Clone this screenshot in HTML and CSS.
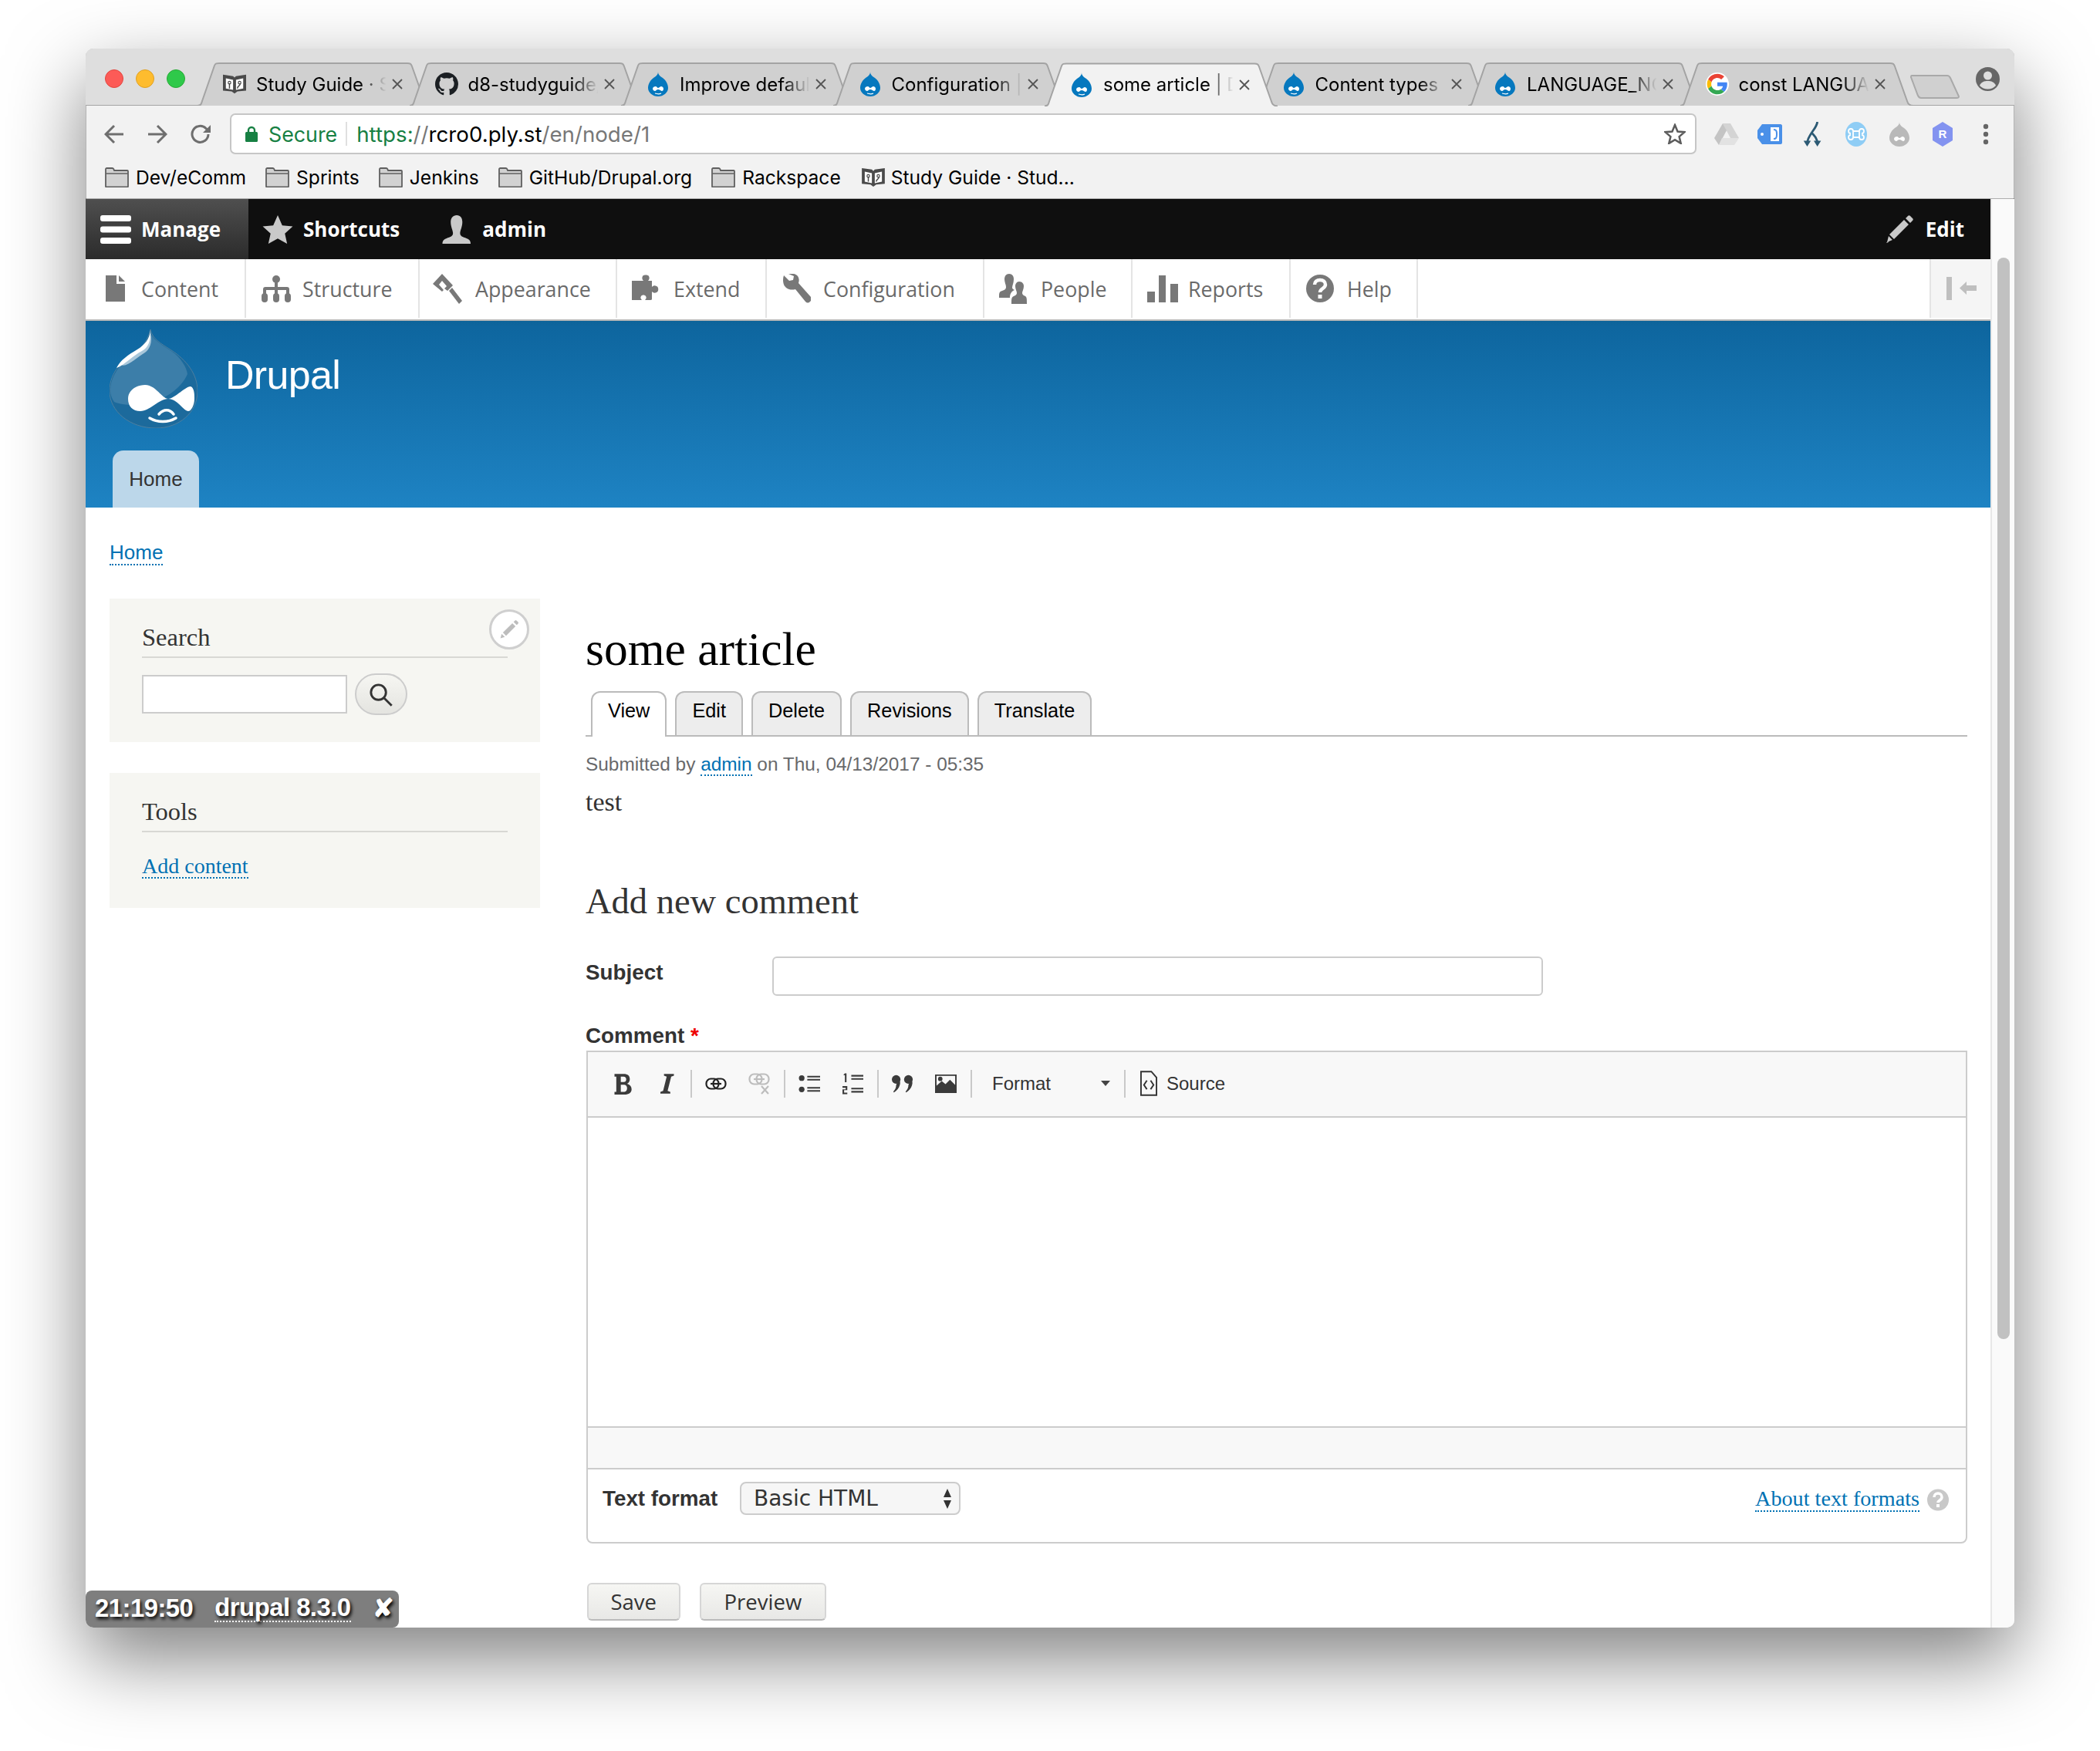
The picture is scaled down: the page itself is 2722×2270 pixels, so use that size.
FILE: index.html
```html
<!DOCTYPE html>
<html lang="en">
<head>
  <meta charset="UTF-8">
  <title>some article | Drupal</title>
  <link rel="stylesheet" href="styles.css">
</head>
<body>

<svg class="sprite" xmlns="http://www.w3.org/2000/svg">
  <symbol id="tab-bg" viewBox="0 0 302 56">
    <path d="M0 56C4 56 5 54 6 50L22 4C23 1 25 1 28 1H272C276 1 277 2 278 5L294 50C295 54 297 56 302 56"/>
  </symbol>
  <symbol id="book" viewBox="0 0 32 28">
    <path fill="#4a4a4a" d="M0 1l14 2 2 2 2-2 14-2v22l-12 1-4 3-4-3-12-1z"/>
    <path fill="#fff" d="M4 6l10 2v14l-10-2zM28 6l-10 2v14l10-2z"/>
    <path fill="none" stroke="#4a4a4a" stroke-width="1.6" d="M9 20v-7M24 13c0 4-4 3-4 7"/>
    <circle cx="9" cy="12" r="1.800" fill="none" stroke="#4a4a4a" stroke-width="1.300"/>
    <circle cx="23" cy="12" r="1.800" fill="none" stroke="#4a4a4a" stroke-width="1.300"/>
  </symbol>
  <symbol id="drop" viewBox="0 0 30 32">
    <path fill="#0678be" d="M15 0c0 4 3 6 6 8 4 3 7 8 7 13 0 6-6 11-13 11S2 27 2 21c0-5 3-10 7-13 3-2 6-4 6-8z"/>
    <path fill="#fff" d="M8 22c0-2 2-3 4-3 1 0 2 2 3 2s3-2 4-2 3 1 3 3-1 3-2 3-3-2-5-2-3 2-4 2-3-1-3-3z"/>
    <path fill="none" stroke="#fff" stroke-width="1.200" d="M11 28c3 1 6 1 8 0"/>
  </symbol>
  <symbol id="close-x" viewBox="0 0 16 16">
    <path fill="none" stroke="#555" stroke-width="1.8" d="M2 2l12 12M14 2L2 14"/>
  </symbol>
  <symbol id="folder" viewBox="0 0 31 26">
    <path fill="#d2d2d2" stroke="#5f5f5f" stroke-width="1.8" d="M1 24.500V2.500c0-1 .5-1.500 1.500-1.500h7c1 0 1.500.5 2 1.500l.5 1.500H29c.8 0 1 .5 1 1v19.500c0 .5-.2 1-1 1H2c-.8 0-1-.5-1-1z"/>
    <path fill="#f3f3f3" stroke="#5f5f5f" stroke-width="1.4" d="M1.500 8h28"/>
  </symbol>
</svg>

<div class="window">

  <div class="tabstrip">
    <div class="lights">
      <span class="light red"></span>
      <span class="light amber"></span>
      <span class="light green"></span>
    </div>
    <div class="tabs">
      <div class="tab">
        <svg class="tab-bg"><use href="#tab-bg"/></svg>
        <svg class="favicon" viewBox="0 0 32 28"><use href="#book"/></svg>
        <span class="tab-title">Study Guide · Study Guide</span>
        <svg class="tab-x"><use href="#close-x"/></svg>
      </div>
      <div class="tab">
        <svg class="tab-bg"><use href="#tab-bg"/></svg>
        <svg class="favicon" viewBox="0 0 16 16"><path fill="#1b1f23" d="M8 0C3.580 0 0 3.580 0 8c0 3.540 2.290 6.530 5.470 7.590.4.070.55-.17.55-.38 0-.19-.01-.82-.01-1.490-2.010.37-2.530-.49-2.690-.94-.09-.23-.48-.94-.82-1.130-.28-.15-.68-.52-.01-.53.63-.01 1.080.58 1.230.82.720 1.210 1.870.87 2.330.66.070-.52.28-.87.51-1.070-1.780-.2-3.640-.89-3.640-3.950 0-.87.31-1.590.82-2.150-.08-.2-.36-1.020.08-2.120 0 0 .67-.21 2.200.82.64-.18 1.320-.27 2-.27.68 0 1.360.09 2 .27 1.530-1.040 2.200-.82 2.200-.82.44 1.100.16 1.920.08 2.120.51.56.82 1.270.82 2.150 0 3.070-1.870 3.750-3.650 3.950.29.25.54.73.54 1.480 0 1.070-.01 1.930-.01 2.200 0 .21.15.46.55.38A8.013 8.013 0 0016 8c0-4.420-3.580-8-8-8z"/></svg>
        <span class="tab-title">d8-studyguide/README</span>
        <svg class="tab-x"><use href="#close-x"/></svg>
      </div>
      <div class="tab">
        <svg class="tab-bg"><use href="#tab-bg"/></svg>
        <svg class="favicon"><use href="#drop"/></svg>
        <span class="tab-title">Improve default language</span>
        <svg class="tab-x"><use href="#close-x"/></svg>
      </div>
      <div class="tab">
        <svg class="tab-bg"><use href="#tab-bg"/></svg>
        <svg class="favicon"><use href="#drop"/></svg>
        <span class="tab-title">Configuration | Drupal</span>
        <svg class="tab-x"><use href="#close-x"/></svg>
      </div>
      <div class="tab tab-active">
        <svg class="tab-bg"><use href="#tab-bg"/></svg>
        <svg class="favicon"><use href="#drop"/></svg>
        <span class="tab-title">some article | Drupal</span>
        <svg class="tab-x"><use href="#close-x"/></svg>
      </div>
      <div class="tab">
        <svg class="tab-bg"><use href="#tab-bg"/></svg>
        <svg class="favicon"><use href="#drop"/></svg>
        <span class="tab-title">Content types | Drupal</span>
        <svg class="tab-x"><use href="#close-x"/></svg>
      </div>
      <div class="tab">
        <svg class="tab-bg"><use href="#tab-bg"/></svg>
        <svg class="favicon"><use href="#drop"/></svg>
        <span class="tab-title">LANGUAGE_NOT_SPECIFIED</span>
        <svg class="tab-x"><use href="#close-x"/></svg>
      </div>
      <div class="tab">
        <svg class="tab-bg"><use href="#tab-bg"/></svg>
        <svg class="favicon" viewBox="-3 -3 54 54">
          <circle cx="24" cy="24" r="27" fill="#fff"/>
          <path fill="#EA4335" d="M24 9.500c3.540 0 6.710 1.220 9.210 3.600l6.850-6.850C35.900 2.380 30.470 0 24 0 14.620 0 6.510 5.380 2.560 13.220l7.980 6.190C12.430 13.720 17.740 9.500 24 9.500z"/>
          <path fill="#4285F4" d="M46.980 24.550c0-1.570-.15-3.090-.38-4.550H24v9.020h12.940c-.58 2.960-2.260 5.480-4.780 7.180l7.730 6c4.510-4.180 7.090-10.360 7.090-17.650z"/>
          <path fill="#FBBC05" d="M10.530 28.590c-.48-1.450-.76-2.990-.76-4.590s.27-3.140.76-4.590l-7.980-6.190C.92 16.460 0 20.120 0 24c0 3.880.92 7.540 2.560 10.780l7.970-6.190z"/>
          <path fill="#34A853" d="M24 48c6.480 0 11.930-2.130 15.890-5.810l-7.730-6c-2.150 1.450-4.920 2.300-8.160 2.300-6.260 0-11.570-4.220-13.470-9.910l-7.980 6.190C6.510 42.620 14.620 48 24 48z"/>
        </svg>
        <span class="tab-title">const LANGUAGE_NOT</span>
        <svg class="tab-x"><use href="#close-x"/></svg>
      </div>
    </div>
    <svg class="newtab" viewBox="0 0 64 31"><path d="M2 1H48C50 1 51 2 52 4L63 28C63 30 62 30 60 30H14C12 30 11 29 10 27L1 3C1 2 1 1 2 1Z"/></svg>
    <svg class="profile" viewBox="0 0 31 31"><circle cx="15.500" cy="15.500" r="15.500" fill="#666"/><circle cx="15.500" cy="11" r="5.500" fill="#dedede"/><path fill="#dedede" d="M5 24c2-5 6-6 10.500-6s8.500 1 10.500 6c-3 3-6.500 4.500-10.500 4.500S8 27 5 24z"/></svg>
  </div>

  <div class="toolbar">
    <svg class="nav-icon" viewBox="0 0 26 26"><path d="M25 13H3M13 2L2 13l11 11"/></svg>
    <svg class="nav-icon" viewBox="0 0 26 26"><path d="M1 13h22M13 2l11 11-11 11"/></svg>
    <svg class="nav-icon" viewBox="0 0 26 26"><path d="M23 13a10.500 10.500 0 1 1-3-7.500l3 3"/><path class="nav-fill" d="M26 1v10H16z"/></svg>
    <div class="omnibox">
      <svg class="lock" viewBox="0 0 16 21"><path fill="none" stroke="#178043" stroke-width="2.400" d="M4 9V6a4 4 0 0 1 8 0v3"/><rect y="8" width="16" height="13" rx="1.500" fill="#178043"/></svg>
      <span class="secure">Secure</span>
      <span class="omni-sep"></span>
      <span class="url"><span class="url-https">https:</span><span class="url-dim">//</span>rcro0.ply.st<span class="url-dim">/en/node/1</span></span>
      <svg class="bookmark-star" viewBox="0 0 28 27"><path d="M14 2l3.500 8.500 9 .7-6.900 5.900 2.100 8.800L14 21.200 6.300 25.900l2.100-8.800L1.500 11.200l9-.7z"/></svg>
    </div>
    <div class="extensions">
      <svg class="ext" viewBox="0 0 32 30"><path fill="#d4d4d4" d="M11 1h10l11 19H21z"/><path fill="#c4c4c4" d="M11 1l5 9L6 29 0 20z"/><path fill="#e2e2e2" d="M10 20h22l-6 9H6z"/></svg>
      <svg class="ext" viewBox="0 0 32 30"><path fill="#4a90e8" d="M6 2h24c1 0 2 1 2 2v22c0 1-1 2-2 2H6l-6-8v-10z"/><rect x="17" y="6" width="11" height="18" fill="#fff"/><circle cx="6" cy="15" r="2" fill="#fff"/><path fill="none" stroke="#4a90e8" stroke-width="2" d="M21 9c3 0 4 1 4 6s-1 6-4 6"/></svg>
      <svg class="ext" viewBox="0 0 28 34"><path fill="none" stroke="#2c5a74" stroke-width="3" d="M20 0c-1 10-14 18-14 30M12 15c4 4 8 8 8 15"/><path fill="#2c5a74" d="M1 26l5 8 5-8zM15 26l5 8 5-8z"/></svg>
      <svg class="ext" viewBox="0 0 28 32"><ellipse cx="14" cy="16" rx="14" ry="16" fill="#8fcdf5"/><path fill="none" stroke="#fff" stroke-width="1.800" d="M10 12h8v8h-8zM10 12a3 3 0 1 0-3 3M18 12a3 3 0 1 1 3 3M10 20a3 3 0 1 1-3-3M18 20a3 3 0 1 0 3-3"/></svg>
      <svg class="ext ext-gray" viewBox="0 0 30 32"><path fill="#b9b9b9" d="M15 0c0 4 3 6 6 8 4 3 7 8 7 13 0 6-6 11-13 11S2 27 2 21c0-5 3-10 7-13 3-2 6-4 6-8z"/><path fill="#fff" d="M8 22c0-2 2-3 4-3 1 0 2 2 3 2s3-2 4-2 3 1 3 3-1 3-2 3-3-2-5-2-3 2-4 2-3-1-3-3z"/></svg>
      <svg class="ext" viewBox="0 0 30 32"><path fill="#8393f0" d="M15 0l13 8v16l-13 8-13-8V8z"/><text x="15" y="21" class="ext-r">R</text></svg>
      <svg class="menu-dots" viewBox="0 0 8 28"><circle cx="4" cy="4" r="3.200"/><circle cx="4" cy="14" r="3.200"/><circle cx="4" cy="24" r="3.200"/></svg>
    </div>
  </div>

  <div class="bookmarks">
    <span class="bm"><svg class="bm-icon"><use href="#folder"/></svg>Dev/eComm</span>
    <span class="bm"><svg class="bm-icon"><use href="#folder"/></svg>Sprints</span>
    <span class="bm"><svg class="bm-icon"><use href="#folder"/></svg>Jenkins</span>
    <span class="bm"><svg class="bm-icon"><use href="#folder"/></svg>GitHub/Drupal.org</span>
    <span class="bm"><svg class="bm-icon"><use href="#folder"/></svg>Rackspace</span>
    <span class="bm"><svg class="bm-icon bm-book"><use href="#book"/></svg>Study Guide · Stud...</span>
  </div>

  <div class="viewport">
    <div class="page">

      <div class="adminbar">
        <a class="admin-item admin-manage">
          <svg class="admin-icon" viewBox="0 0 40 37"><rect width="40" height="8" rx="3"/><rect y="14.500" width="40" height="8" rx="3"/><rect y="29" width="40" height="8" rx="3"/></svg>
          Manage
        </a>
        <a class="admin-item">
          <svg class="admin-icon star" viewBox="0 0 40 38"><path d="M20 0l6 13.500 14 1.500-10.500 9.500 3 13.500L20 31l-12.500 7 3-13.500L0 15l14-1.500z"/></svg>
          Shortcuts
        </a>
        <a class="admin-item admin-user">
          <svg class="admin-icon" viewBox="0 0 40 38"><path d="M20 0c5 0 7.500 4 7.500 9 0 7-3 11-3 15 0 4 3 5 9 7 4 1.500 5 4 5 7H1c0-3 1-5.500 5-7 6-2 9-3 9-7 0-4-3-8-3-15 0-5 3-9 8-9z"/></svg>
          admin
        </a>
        <a class="admin-item admin-edit">
          <svg class="admin-icon" viewBox="0 0 36 36"><path d="M5 25L24 6l6 6-19 19zM26 4l3-3c1-1 2-1 3 0l3 3c1 1 1 2 0 3l-3 3z"/><path d="M4 27l5 5-7 3zM1 36l2-3 1 2z"/></svg>
          Edit
        </a>
      </div>

      <div class="tray">
        <a class="tray-item item-content">
          <svg class="tray-icon" viewBox="0 0 25 34"><path d="M0 0h14v11h11v23H0zM17 0l8 8h-8z"/></svg>
          Content
        </a>
        <a class="tray-item item-structure">
          <svg class="tray-icon" viewBox="0 0 38 35"><circle cx="19" cy="5" r="5"/><path d="M17 8h4v7h12c2 0 3 1 3 3v6h-4v-5H21v5h-4v-5H6v5H2v-6c0-2 1-3 3-3h12z"/><rect y="23" width="8" height="12" rx="4"/><rect x="15" y="23" width="8" height="12" rx="4"/><rect x="30" y="23" width="8" height="12" rx="4"/></svg>
          Structure
        </a>
        <a class="tray-item item-appearance">
          <svg class="tray-icon" viewBox="0 0 38 39"><path fill-rule="evenodd" d="M12 0l14 15-7 7-4-3 3-3-6-7-4 5 6 7-2 2L0 13zM21 22l4-4 13 17-4 4z"/></svg>
          Appearance
        </a>
        <a class="tray-item item-extend">
          <svg class="tray-icon" viewBox="0 0 40 36"><path d="M10 8h5c-2-2-2-4-1-6 1-2 7-2 8 0 1 2 1 4-1 6h5v8c2-2 4-2 6-1 3 1 3 7 0 8-2 1-4 1-6-1v9c0 1 0 2-2 2h-7c2-2 2-4 1-5-1-2-5-2-6 0-1 1-1 3 1 5H0V8z"/></svg>
          Extend
        </a>
        <a class="tray-item item-config">
          <svg class="tray-icon" viewBox="0 0 38 39"><path d="M3 2l7 7 5-1 1-5-7-3c5-1 10 0 12 3 2 3 2 6 1 9l16 18c1 2 1 4-1 6-2 2-4 2-6 0L18 20c-4 1-8 1-12-2C2 15 1 8 3 2z"/></svg>
          Configuration
        </a>
        <a class="tray-item item-people">
          <svg class="tray-icon" viewBox="0 0 36 39"><path d="M13 0c4 0 6 3 6 7 0 5-2 8-2 11 0 1 1 2 3 3-3 1-6 4-6 10H0c0-6 0-8 4-9 4-1 5-3 5-5 0-3-2-6-2-10s2-7 6-7z"/><path d="M26 10c4 0 6 3 6 6 0 4-2 6-2 9 0 2 2 3 4 4 2 1 2 4 2 10H16c0-6 0-9 3-10 2-1 4-2 4-4 0-3-2-5-2-9 0-3 2-6 5-6z"/></svg>
          People
        </a>
        <a class="tray-item item-reports">
          <svg class="tray-icon" viewBox="0 0 40 35"><rect y="21" width="10" height="14"/><rect x="15" width="9" height="35"/><rect x="30" y="11" width="10" height="24"/></svg>
          Reports
        </a>
        <a class="tray-item item-help">
          <svg class="tray-icon" viewBox="0 0 36 36"><circle cx="18" cy="18" r="18"/><path fill="none" stroke="#fff" stroke-width="4.500" d="M11 13c0-4 3-6 7-6s7 2 7 6c0 5-7 5-7 10"/><rect x="15.500" y="26" width="5" height="5" fill="#fff"/></svg>
          Help
        </a>
        <div class="tray-toggle">
          <svg viewBox="0 0 39 30"><rect width="7" height="30"/><path d="M17 14.500l9-8.500v5h13v7H26v5z"/></svg>
        </div>
      </div>

      <header class="site-header">
        <div class="branding">
          <svg class="logo" viewBox="0 0 114 128">
            <path fill="#1c6a9c" stroke="#4e7f9f" stroke-width="1" d="M53 0C55 12 66 18 80 27 100 40 114 58 114 80 114 108 90 128 60 128 26 128 0 106 0 80 0 55 18 38 36 27 44 22 50 12 53 0Z"/>
            <path fill="#3c7ea9" d="M53 4C56 13 66 19 80 28 93 37 100 50 101 58 92 78 72 90 50 96 34 100 16 98 6 94 2 88 1 84 1 78 3 52 22 38 36 28 44 22 50 14 53 4Z"/>
            <path fill="#a9c7da" d="M53 6C51 16 48 20 40 26 28 34 20 40 15 46 22 50 36 36 46 30 52 26 56 16 53 6Z"/>
            <path fill="#fff" d="M53 1C52 12 46 20 36 26 24 33 14 40 9 50 20 46 30 34 42 28 50 24 54 14 53 1Z"/>
            <path fill="#fff" d="M24 90C24 78 36 72 46 72 60 72 68 90 76 90 84 90 98 74 105 74 110 76 110 84 110 90 110 98 106 106 102 106 96 106 88 90 76 90 64 90 52 106 40 106 30 106 24 100 24 90Z"/>
            <path fill="none" stroke="#fff" stroke-width="3.500" stroke-linecap="round" d="M52 115C62 121 76 121 86 115M64 110C70 103 78 103 83 110"/>
          </svg>
          <span class="site-name">Drupal</span>
        </div>
        <nav class="main-nav"><a class="main-nav-link">Home</a></nav>
      </header>

      <div class="breadcrumb"><a class="link">Home</a></div>

      <div class="layout">
        <aside class="sidebar">
          <section class="block">
            <h2 class="block-title">Search</h2>
            <button class="contextual"><svg viewBox="0 0 32 32"><path d="M6 21L21 6l5 5-15 15zM23 4l2-2c1-1 2-1 3 0l2 2c1 1 1 2 0 3l-2 2zM4 23l5 5-7 2z"/></svg></button>
            <form class="search-form">
              <input class="search-input" type="text">
              <button class="search-button" type="button"><svg viewBox="0 0 28 28"><circle cx="11" cy="11" r="8.500"/><path d="M17 17l9 9"/></svg></button>
            </form>
          </section>
          <section class="block">
            <h2 class="block-title">Tools</h2>
            <div class="block-links"><a class="link">Add content</a></div>
          </section>
        </aside>

        <main class="content">
          <h1 class="page-title">some article</h1>
          <ul class="local-tabs">
            <li class="local-tab active">View</li>
            <li class="local-tab">Edit</li>
            <li class="local-tab">Delete</li>
            <li class="local-tab">Revisions</li>
            <li class="local-tab">Translate</li>
          </ul>
          <p class="submitted">Submitted by <a class="link">admin</a> on Thu, 04/13/2017 - 05:35</p>
          <p class="body-text">test</p>

          <h2 class="comment-title">Add new comment</h2>

          <div class="field-subject">
            <label class="field-label">Subject</label>
            <input class="subject-input" type="text">
          </div>

          <label class="field-label comment-label">Comment <span class="required">*</span></label>

          <div class="editor">
            <div class="editor-toolbar">
              <span class="ed-btn"><svg viewBox="0 0 20 24"><path fill-rule="evenodd" d="M1 1h10c5 0 7 2 7 6 0 2-1 4-3 5 3 1 5 3 5 6 0 4-3 6-8 6H1v-3h2V4H1zM8 4v6h3c2 0 3-1 3-3s-1-3-3-3zM8 13v8h4c2 0 3-2 3-4s-1-4-3-4z"/></svg></span>
              <span class="ed-btn"><svg viewBox="0 0 18 24"><path d="M7 1h11v2l-3 1-4 16 3 1v2H3v-2l3-1 4-16-3-1z"/></svg></span>
              <span class="ed-sep"></span>
              <span class="ed-btn"><svg class="ed-stroke" viewBox="0 0 28 16"><rect x="1.500" y="1.500" width="16" height="13" rx="6"/><rect x="10.500" y="1.500" width="16" height="13" rx="6"/><path d="M7 8h14"/></svg></span>
              <span class="ed-btn ed-off"><svg class="ed-stroke" viewBox="0 0 28 28"><rect x="1.500" y="1.500" width="16" height="13" rx="6"/><rect x="10.500" y="1.500" width="16" height="13" rx="6"/><path d="M7 8h14"/><path class="ed-x" d="M17 17l9 10M26 17l-9 10"/></svg></span>
              <span class="ed-sep"></span>
              <span class="ed-btn"><svg viewBox="0 0 27 24"><circle cx="4" cy="5" r="3.500"/><circle cx="4" cy="19" r="3.500"/><path d="M11 2h16v2H11zM11 6h16v2H11zM11 16h16v2H11zM11 20h16v2H11z"/></svg></span>
              <span class="ed-btn"><svg viewBox="0 0 27 26"><path d="M12 2h15v2H12zM12 6h15v2H12zM12 18h15v2H12zM12 22h15v2H12z"/><path d="M2 2l2-2h2v11H4V2.500zM1 16h6v5H3v3h4v2H1v-6h4v-2H1z"/></svg></span>
              <span class="ed-sep"></span>
              <span class="ed-btn"><svg viewBox="0 0 30 24"><circle cx="6" cy="6" r="6"/><circle cx="23" cy="6" r="6"/><path d="M8 8c4 0 4 2 3 6-1 4-4 8-8 10l-1-1c3-3 4-6 4-9zM25 8c4 0 4 2 3 6-1 4-4 8-8 10l-1-1c3-3 4-6 4-9z"/></svg></span>
              <span class="ed-btn"><svg viewBox="0 0 29 25"><path fill-rule="evenodd" d="M0 0h29v25H0zM2 2v13l7-6 5 4 6-6 7 7V2z"/><circle cx="7" cy="6" r="3"/></svg></span>
              <span class="ed-sep"></span>
              <span class="ed-format">Format<i class="caret"></i></span>
              <span class="ed-sep"></span>
              <span class="ed-source">
                <svg viewBox="0 0 23 34"><path fill="none" stroke="#333" stroke-width="2" d="M1 1h14l7 8v24H1z"/><path fill="none" stroke="#333" stroke-width="2" d="M9 13l-4 6 4 6M14 13l4 6-4 6"/></svg>
                Source
              </span>
            </div>
            <div class="editor-body"></div>
            <div class="editor-path"></div>
            <div class="format-row">
              <div class="format-left">
                <label class="field-label format-label">Text format</label>
                <div class="format-select">Basic HTML<svg viewBox="0 0 12 28"><path d="M6 1l5 11H1zM6 27l5-11H1z"/></svg></div>
              </div>
              <div class="format-help">
                <a class="link serif-link">About text formats</a>
                <svg class="help-badge" viewBox="0 0 28 29"><circle cx="14" cy="14.500" r="14"/><path fill="none" stroke="#fff" stroke-width="3.500" d="M9 11c0-3 2-5 5-5s5 2 5 5c0 4-5 4-5 7"/><rect x="12" y="20" width="4" height="4" fill="#fff"/></svg>
              </div>
            </div>
          </div>

          <div class="form-actions">
            <button class="form-button" type="button">Save</button>
            <button class="form-button" type="button">Preview</button>
          </div>
        </main>
      </div>
    </div>

    <div class="scrollbar"><div class="scroll-thumb"></div></div>

    <div class="devbar">
      <span>21:19:50</span>
      <a class="devbar-link">drupal 8.3.0</a>
      <span>✘</span>
    </div>
  </div>
</div>

</body>
</html>
```

FILE: styles.css
```css
* {
  box-sizing: border-box;
}
html, body {
  margin: 0;
  background: #fff;
}
body {
  width: 2722px;
  height: 2270px;
  overflow: hidden;
  font-family: "Liberation Sans", Arial, sans-serif;
  color: #333;
}
a {
  text-decoration: none;
}
.sprite {
  position: absolute;
  width: 0;
  height: 0;
}

/* browser window */
.window {
  position: relative;
  width: 2500px;
  height: 2047px;
  margin: 63px 0 0 111px;
  border-radius: 10px;
  overflow: hidden;
  outline: 1px solid rgba(0,0,0,.25);
  outline-offset: -1px;
  display: flex;
  flex-direction: column;
}
body::before {
  content: "";
  position: absolute;
  left: 111px;
  top: 63px;
  width: 2500px;
  height: 2047px;
  border-radius: 10px;
  box-shadow: 0 40px 100px rgba(0,0,0,.5);
}

.tabstrip {
  height: 74px;
  flex: none;
  display: flex;
  align-items: flex-start;
  padding-left: 25px;
  background: #dedede;
  border-bottom: 1px solid #a4a4a4;
  position: relative;
}
.lights {
  display: flex;
  gap: 16px;
  margin-top: 27px;
}
.light {
  width: 24px;
  height: 24px;
  border-radius: 50%;
}
.red { background: #fc5b57; border: 1px solid #e2463f; }
.amber { background: #febc2e; border: 1px solid #dfa023; }
.green { background: #2fc94a; border: 1px solid #27aa35; }

.tabs {
  display: flex;
  margin: 18px 0 0 16px;
}
.tab {
  position: relative;
  width: 302px;
  height: 56px;
  margin-right: -27.5px;
  padding-left: 33px;
  display: flex;
  align-items: center;
  font-family: Inter, "Liberation Sans", sans-serif;
  font-size: 24px;
  color: #000;
}
.tab-active {
  z-index: 2;
  height: 57px;
}
.tab-bg {
  position: absolute;
  left: 0;
  top: 0;
  width: 302px;
  height: 56px;
  fill: #d0d0d0;
  stroke: #a3a3a3;
  stroke-width: 2px;
}
.tab-active .tab-bg {
  height: 57px;
  fill: #f2f2f2;
}
.favicon {
  position: relative;
  width: 30px;
  height: 32px;
  flex: none;
}
.tab-title {
  position: relative;
  width: 172px;
  margin-left: 13px;
  white-space: nowrap;
  overflow: hidden;
  -webkit-mask-image: linear-gradient(to right, #000 78%, transparent 98%);
  mask-image: linear-gradient(to right, #000 78%, transparent 98%);
}
.tab-x {
  position: relative;
  width: 16px;
  height: 16px;
  margin-left: 3px;
  flex: none;
}
.newtab {
  width: 64px;
  height: 31px;
  margin: 34px 0 0 24px;
  fill: #d0d0d0;
  stroke: #a9a9a9;
  stroke-width: 2px;
  flex: none;
}
.profile {
  width: 31px;
  height: 31px;
  margin: 24px 0 0 21px;
  flex: none;
}

/* address bar */
.toolbar {
  height: 74px;
  flex: none;
  display: flex;
  align-items: flex-start;
  padding: 10px 0 0 24px;
  background: #f2f2f2;
}
.nav-icon {
  width: 26px;
  height: 26px;
  margin: 14px 30px 0 0;
  fill: none;
  stroke: #6e6e6e;
  stroke-width: 3px;
  flex: none;
}
.nav-icon:nth-child(3) {
  margin-right: 25px;
}
.nav-fill {
  fill: #6e6e6e;
  stroke: none;
}
.omnibox {
  width: 1901px;
  height: 53px;
  flex: none;
  display: flex;
  align-items: center;
  padding-left: 18px;
  padding-right: 12px;
  background: #fff;
  border: 2px solid #c6c6c6;
  border-radius: 7px;
  font-family: Inter, "Liberation Sans", sans-serif;
  font-size: 26.800px;
}
.lock {
  width: 16px;
  height: 21px;
  flex: none;
}
.secure {
  margin-left: 14px;
  color: #178043;
}
.omni-sep {
  width: 2px;
  height: 31px;
  margin: 0 12px 0 11px;
  background: #e0e0e0;
}
.url {
  color: #000;
  flex: 1;
  font-size: 27.700px;
}
.url-https {
  color: #178043;
}
.url-dim {
  color: #777;
}
.bookmark-star {
  width: 28px;
  height: 27px;
  fill: none;
  stroke: #5c5c5c;
  stroke-width: 2.5px;
}
.extensions {
  display: flex;
  align-items: center;
  height: 53px;
  gap: 24px;
  margin-left: 23px;
}
.ext {
  width: 32px;
  height: 32px;
}
.ext-r {
  font: bold 15px "Liberation Sans", sans-serif;
  fill: #fff;
  text-anchor: middle;
}
.menu-dots {
  width: 8px;
  height: 28px;
  margin-left: 12px;
  fill: #666;
}

/* bookmarks */
.bookmarks {
  height: 47px;
  flex: none;
  display: flex;
  align-items: center;
  gap: 25px;
  padding: 0 0 9px 25px;
  background: #f2f2f2;
  border-bottom: 1px solid #aeaeae;
  font-family: Inter, "Liberation Sans", sans-serif;
  font-size: 24.600px;
  color: #000;
}
.bm {
  display: flex;
  align-items: center;
  gap: 9px;
}
.bm-icon {
  width: 31px;
  height: 26px;
}
.bm-book {
  width: 34px;
  margin-right: -3px;
}

/* viewport */
.viewport {
  flex: 1;
  min-height: 0;
  display: flex;
  position: relative;
  background: #fff;
}
.page {
  flex: 1;
  min-width: 0;
  overflow: hidden;
}
.scrollbar {
  width: 31px;
  flex: none;
  padding: 76px 6px 0 7px;
  background: #fafafa;
  border-left: 2px solid #e8e8e8;
}
.scroll-thumb {
  height: 1402px;
  border-radius: 9px;
  background: #c1c1c1;
}

/* admin toolbar */
.adminbar {
  height: 78px;
  display: flex;
  background: #0f0f0f;
  font-family: "Open Sans", sans-serif;
  font-weight: 700;
  font-size: 26px;
  color: #fff;
}
.admin-item {
  display: flex;
  align-items: center;
  padding-left: 18px;
  gap: 13px;
}
.admin-manage {
  width: 211px;
  padding-left: 19px;
  gap: 13px;
  background: linear-gradient(#4f4f4f, #2b2b2b);
}
.admin-user {
  margin-left: 36px;
}
.admin-edit {
  margin-left: auto;
  padding-right: 34px;
  gap: 16px;
}
.admin-icon {
  width: 40px;
  height: 37px;
  fill: #c9c9c9;
  flex: none;
}
.admin-manage .admin-icon {
  fill: #fff;
}
.admin-edit .admin-icon {
  width: 36px;
  height: 36px;
}

.tray {
  height: 80px;
  display: flex;
  padding-bottom: 2px;
  background: #fff;
  border-bottom: 2px solid #b8b8b8;
  font-family: "Open Sans", sans-serif;
  font-size: 26.800px;
  color: #6a6a6a;
}
.tray-item {
  display: flex;
  align-items: center;
  border-right: 2px solid #e4e4e4;
  flex: none;
}
.tray-icon {
  fill: #787878;
  flex: none;
  margin-right: 16px;
}
.item-content { width: 208px; padding-left: 26px; }
.item-content .tray-icon { width: 25px; height: 34px; margin-right: 21px; }
.item-structure { width: 225px; padding-left: 20px; }
.item-structure .tray-icon { width: 38px; height: 35px; margin-right: 15px; }
.item-appearance { width: 256px; padding-left: 17px; }
.item-appearance .tray-icon { width: 38px; height: 39px; margin-right: 17px; }
.item-extend { width: 194px; padding-left: 19px; }
.item-extend .tray-icon { width: 40px; height: 36px; margin-right: 14px; }
.item-config { width: 282px; padding-left: 19px; }
.item-config .tray-icon { width: 38px; height: 39px; }
.item-people { width: 192px; padding-left: 19px; }
.item-people .tray-icon { width: 36px; height: 39px; margin-right: 18px; }
.item-reports { width: 205px; padding-left: 19px; }
.item-reports .tray-icon { width: 40px; height: 35px; margin-right: 13px; }
.item-help { width: 165px; padding-left: 20px; }
.item-help .tray-icon { width: 36px; height: 36px; margin-right: 17px; }
.tray-toggle {
  margin-left: auto;
  width: 79px;
  display: flex;
  align-items: center;
  padding-left: 20px;
  background: #f5f5f5;
  border-left: 2px solid #e4e4e4;
  fill: #bfbfbf;
}
.tray-toggle svg {
  width: 39px;
  height: 30px;
}

/* site header */
.site-header {
  height: 242px;
  display: flex;
  flex-direction: column;
  justify-content: space-between;
  padding-top: 11px;
  background: linear-gradient(#0d6399 0, #0e669f 8px, #1e83c3 100%);
}
.branding {
  display: flex;
  align-items: flex-start;
  gap: 36px;
  padding-left: 31px;
}
.logo {
  width: 114px;
  height: 128px;
  flex: none;
}
.site-name {
  margin-top: 29px;
  font-size: 52px;
  line-height: 60px;
  letter-spacing: -.7px;
  color: #fff;
}
.main-nav {
  padding-left: 35px;
  display: flex;
}
.main-nav-link {
  width: 112px;
  height: 74px;
  padding-top: 22px;
  text-align: center;
  font-size: 26px;
  line-height: 30px;
  color: #333;
  background: #bcd7ea;
  border-radius: 14px 14px 0 0;
}

/* shared text */
.link {
  color: #0071b3;
  border-bottom: 2px dotted #0071b3;
}
.breadcrumb {
  margin: 43px 0 43px 31px;
  height: 32px;
  font-size: 26px;
  line-height: 30px;
}
.breadcrumb .link {
  display: inline-block;
}

.layout {
  display: grid;
  grid-template-columns: 558px 1791px;
  column-gap: 59px;
  padding: 0 30px 0 31px;
}

/* sidebar */
.sidebar {
  display: flex;
  flex-direction: column;
  gap: 40px;
  font-family: "Liberation Serif", Georgia, serif;
}
.block {
  position: relative;
  padding: 30px 42px 35px;
  background: #f6f6f2;
}
.block-title {
  margin: 0;
  height: 47px;
  font-size: 32.500px;
  font-weight: 400;
  line-height: 41px;
  color: #333;
  border-bottom: 2px solid #d8d8d4;
}
.contextual {
  position: absolute;
  right: 14px;
  top: 14px;
  width: 52px;
  height: 52px;
  padding: 10px;
  background: #fff;
  border: 3px solid #cfcfcf;
  border-radius: 50%;
  fill: #bdbdbd;
}
.contextual svg {
  display: block;
  width: 100%;
  height: 100%;
}
.search-form {
  display: flex;
  align-items: center;
  gap: 10px;
  margin-top: 20px;
}
.search-input {
  width: 266px;
  height: 50px;
  padding: 0;
  background: #fff;
  border: 2px solid #ccc;
}
.search-button {
  width: 68px;
  height: 54px;
  padding: 10px 0;
  background: linear-gradient(#f6f6f2, #e4e4e0);
  border: 2px solid #ccc;
  border-radius: 27px;
}
.search-button svg {
  display: block;
  width: 32px;
  height: 32px;
  margin: 0 auto;
  fill: none;
  stroke: #333;
  stroke-width: 2.500px;
}
.block-links {
  margin-top: 27px;
  font-size: 28px;
  line-height: 34px;
}
.block-links .link {
  display: inline-block;
  line-height: 28px;
}
.block + .block {
  padding-bottom: 37px;
}

/* main column */
.page-title {
  margin: 30px 0 20px;
  font-family: "Liberation Serif", Georgia, serif;
  font-size: 61.500px;
  font-weight: 400;
  line-height: 70px;
  color: #000;
}
.local-tabs {
  display: flex;
  gap: 11px;
  height: 59px;
  margin: 0;
  padding: 0 0 0 7px;
  list-style: none;
  border-bottom: 2px solid #bbb;
  font-size: 25.300px;
  line-height: 46px;
  color: #000;
}
.local-tab {
  height: 57px;
  padding: 0 20px;
  background: #ededed;
  border: 2px solid #bbb;
  border-bottom: 0;
  border-radius: 12px 12px 0 0;
}
.local-tab.active {
  height: 59px;
  background: #fff;
}
.submitted {
  margin: 21px 0 14px;
  font-size: 24.400px;
  line-height: 30px;
  color: #68696b;
}
.body-text {
  margin: 0 0 82px;
  font-family: "Liberation Serif", Georgia, serif;
  font-size: 34px;
  line-height: 40px;
  color: #333;
}
.comment-title {
  margin: 0 0 44px;
  font-family: "Liberation Serif", Georgia, serif;
  font-size: 46.500px;
  font-weight: 400;
  line-height: 54px;
  color: #333;
}
.field-subject {
  display: flex;
}
.field-label {
  display: block;
  font-size: 27.800px;
  font-weight: 700;
  line-height: 41px;
  color: #333;
}
.field-subject .field-label {
  width: 242px;
}
.subject-input {
  width: 999px;
  height: 51px;
  padding: 0;
  background: #fff;
  border: 2px solid #ccc;
  border-radius: 6px;
}
.comment-label {
  margin-top: 34px;
  line-height: 36px;
  margin-bottom: 1px;
}
.required {
  color: #e00;
}

/* editor */
.editor {
  margin-left: 1px;
  border: 2px solid #ccc;
  border-radius: 0 0 8px 8px;
}
.editor-toolbar {
  height: 85px;
  display: flex;
  align-items: center;
  padding: 0 0 2px 17px;
  background: #f8f8f8;
  border-bottom: 2px solid #ccc;
  font-size: 24px;
  color: #333;
}
.ed-btn {
  width: 56px;
  display: flex;
  justify-content: center;
  align-items: center;
  fill: #3b3b3b;
}
.ed-btn svg {
  width: 28px;
  height: 28px;
}
.ed-stroke {
  fill: none;
  stroke: #222;
  stroke-width: 2.200px;
}
.ed-off .ed-stroke {
  stroke: #bdbdbd;
}
.ed-sep {
  width: 2px;
  height: 36px;
  margin: 0 3px 0 4px;
  background: #c9c9c9;
}
.ed-format {
  width: 190px;
  display: flex;
  align-items: center;
  padding-left: 23px;
}
.caret {
  margin-left: 65px;
  border-top: 7px solid #444;
  border-left: 6px solid transparent;
  border-right: 6px solid transparent;
}
.ed-source {
  display: flex;
  align-items: center;
  gap: 12px;
  padding-left: 16px;
}
.ed-source svg {
  width: 22px;
  height: 33px;
}
.editor-body {
  height: 400px;
  background: #fff;
}
.editor-path {
  height: 56px;
  background: #f8f8f8;
  border-top: 2px solid #ccc;
  border-bottom: 2px solid #ccc;
}
.format-row {
  height: 94px;
  display: flex;
  justify-content: space-between;
  align-items: flex-start;
  padding: 16px 22px 0 19px;
}
.format-left {
  display: flex;
  align-items: center;
}
.format-label {
  width: 178px;
  font-size: 27.800px;
}
.format-select {
  width: 286px;
  height: 43px;
  display: flex;
  align-items: center;
  justify-content: space-between;
  padding: 0 9px 0 16px;
  font-family: "DejaVu Sans", sans-serif;
  font-size: 28px;
  color: #333;
  background: #f6f6f6;
  border: 2px solid #ccc;
  border-radius: 8px;
}
.format-select svg {
  width: 12px;
  height: 28px;
  fill: #333;
}
.format-help {
  display: flex;
  align-items: center;
  gap: 10px;
  margin-top: 7px;
}
.serif-link {
  display: inline-block;
  font-family: "Liberation Serif", Georgia, serif;
  font-size: 28.200px;
  line-height: 30px;
}
.help-badge {
  width: 28px;
  height: 29px;
  fill: #c8c8c8;
}
.form-actions {
  display: flex;
  gap: 25px;
  margin: 51px 0 0 2px;
}
.form-button {
  height: 49px;
  padding: 0 28.500px;
  font-family: "Open Sans", sans-serif;
  font-size: 27.500px;
  color: #333;
  background: linear-gradient(#f6f6f3, #e8e8e6);
  border: 2px solid #d6d6d6;
  border-bottom-color: #bbb;
  border-radius: 6px;
}
.form-button + .form-button {
  padding: 0 30px;
}

/* floating dev toolbar */
.devbar {
  position: absolute;
  left: 0;
  bottom: 0;
  width: 406px;
  height: 48px;
  display: flex;
  align-items: center;
  gap: 28px;
  padding: 0 0 2px 12px;
  background: #7e7e7e;
  border-radius: 8px;
  font-size: 32.800px;
  font-weight: 700;
  letter-spacing: -.5px;
  color: #fff;
  text-shadow: 2px 3px 4px #000;
}
.devbar-link {
  border-bottom: 2px dotted #fff;
  line-height: 34px;
}
```
